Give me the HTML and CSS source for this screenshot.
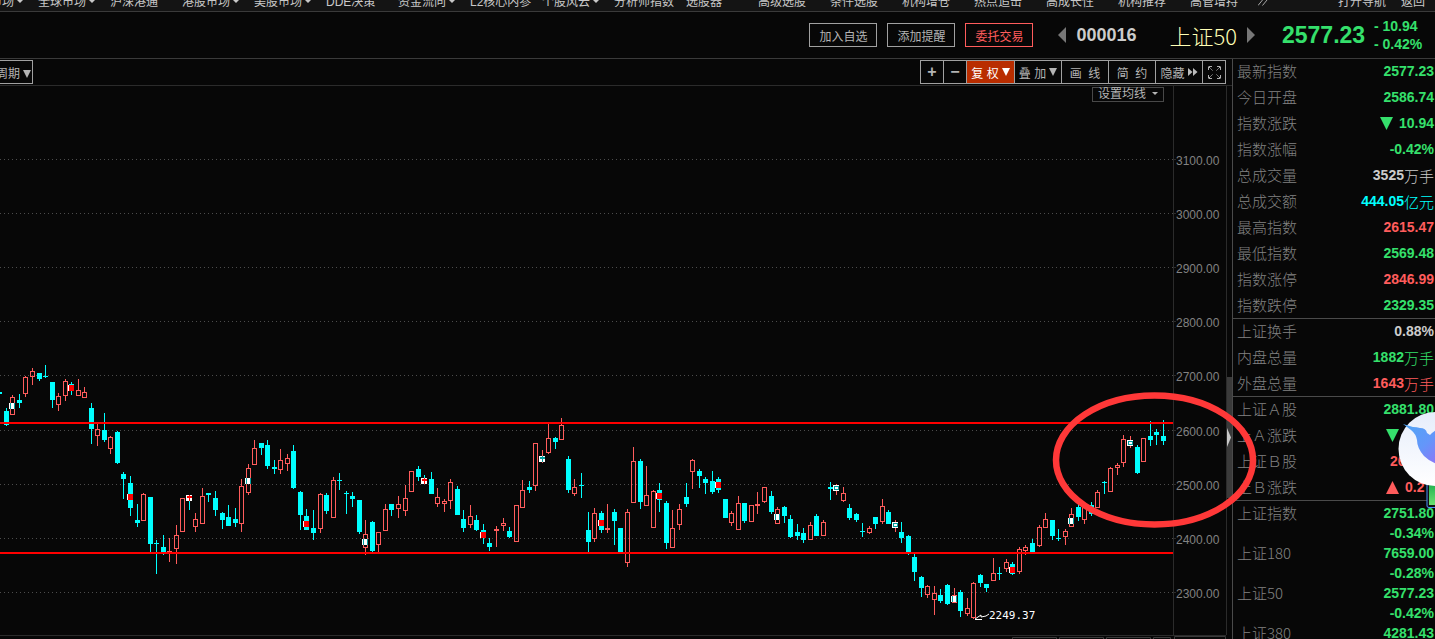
FILE: index.html
```html
<!DOCTYPE html>
<html lang="zh-CN">
<head>
<meta charset="utf-8">
<title>上证50 000016</title>
<link rel="stylesheet" href="styles.css">
</head>
<body>
<nav class="nav">
  <a class="first caret" href="#">市场</a><a class="caret" href="#">全球市场</a><a href="#">沪深港通</a><a class="caret" href="#">港股市场</a><a class="caret" href="#">美股市场</a><a href="#">DDE决策</a><a class="caret" href="#">资金流向</a><a href="#">L2核心内参</a><a class="caret" href="#">个股风云</a><a href="#">分析师指数</a><a href="#">选股器</a><a href="#">高级选股</a><a href="#">条件选股</a><a href="#">机构增仓</a><a href="#">热点追击</a><a href="#">高成长性</a><a href="#">机构推荐</a><a href="#">高管增持</a>
  <svg class="more" width="10" height="10" viewBox="0 0 10 10"><path d="M0 8.500 4.500 3 M4.500 8.500 9 3" fill="none" stroke="#a8a8a8"/></svg>
  <span class="nav-end"><a href="#">打开导航</a><a href="#">返回</a></span>
</nav>
<header class="head">
  <div class="actions"><button>加入自选</button><button>添加提醒</button><button class="trade">委托交易</button></div>
  <div class="stock">
    <svg width="8" height="16" viewBox="0 0 8 16"><path d="M8 0V16L0 8z" fill="#777"/></svg>
    <span class="code">000016</span>
    <h1>上证50</h1>
    <svg width="8" height="16" viewBox="0 0 8 16"><path d="M0 0V16L8 8z" fill="#777"/></svg>
  </div>
  <strong class="price">2577.23</strong>
  <div class="change"><span>- 10.94</span><span>- 0.42%</span></div>
</header>
<main class="main">
  <section class="left">
    <div class="tools">
      <button class="period">周期<i class="tri"></i></button>
      <div class="toolset">
        <button class="sq sign" aria-label="放大">+</button>
        <button class="sq sign" aria-label="缩小">−</button>
        <button class="wide active">复 权<i class="tri"></i></button>
        <button class="wide">叠 加<i class="tri"></i></button>
        <button class="wide">画&nbsp; 线</button>
        <button class="wide">简&nbsp; 约</button>
        <button class="wide">隐藏<svg width="10" height="8" viewBox="0 0 10 8"><path d="M0 0 4.500 4 0 8zM5 0 9.500 4 5 8z" fill="#bbb"/></svg></button>
        <button class="sq" aria-label="全屏"><svg width="13" height="13" viewBox="0 0 13 13"><path d="M.5 4V.5H4M.5.5 4.500 4.500M9 .5H12.500V4M12.500.5 8.500 4.500M.5 9V12.500H4M.5 12.500 4.500 8.500M9 12.500H12.500V9M12.500 12.500 8.500 8.500" fill="none" stroke="#b0b0b0" stroke-dasharray="3 1"/></svg></button>
      </div>
    </div>
    <div class="chart">
      <button class="ma">设置均线<i class="tri small"></i></button>
      <svg class="plot" viewBox="0 86 1232 553" preserveAspectRatio="xMinYMin meet">
        <g id="grid" class="grid"></g>
        <g id="candles" shape-rendering="crispEdges"></g>
        <path d="M0 423H1173M0 553H1173" stroke="#f00" stroke-width="2"/>
        <path d="M1173.500 86V635M1226.500 86V635" stroke="#2b2b2b"/>
        <path d="M0 635.500H1226" stroke="#2b2b2b"/>
        <path d="M1012.500 639V637.500H1056.500V639M1059.500 639V637.500H1103.500V639M1106.500 639V637.500H1150.500V639M1153.500 639V637.500H1170.500V639M1174.500 639V636.500H1225.500V639" fill="none" stroke="#3a3a3a"/>
        <path d="M1227 377H1232V498H1227z" fill="#3a3a3a"/>
        <path d="M1227 428 1231 437.500 1227 447z" fill="#c8c8c8"/>
        <path d="M975 619 981 615 981 617 986 616 989 614M975 619.500H982" fill="none" stroke="#fff"/>
        <text class="low" x="989" y="619">2249.37</text>
      </svg>
    </div>
  </section>
  <aside class="panel">
    <dl class="group">
      <div><dt>最新指数</dt><dd>2577.23</dd></div>
      <div><dt>今日开盘</dt><dd>2586.74</dd></div>
      <div><dt>指数涨跌</dt><dd><svg width="13" height="13" viewBox="0 0 13 13"><path d="M0 0H13L6.500 13z" fill="#35e06c"/></svg>10.94</dd></div>
      <div><dt>指数涨幅</dt><dd>-0.42%</dd></div>
      <div><dt>总成交量</dt><dd class="plain">3525<span>万手</span></dd></div>
      <div><dt>总成交额</dt><dd class="cyan">444.05<span>亿元</span></dd></div>
      <div><dt>最高指数</dt><dd class="up">2615.47</dd></div>
      <div><dt>最低指数</dt><dd>2569.48</dd></div>
      <div><dt>指数涨停</dt><dd class="up">2846.99</dd></div>
      <div><dt>指数跌停</dt><dd>2329.35</dd></div>
    </dl>
    <dl class="group">
      <div><dt>上证换手</dt><dd class="plain">0.88%</dd></div>
      <div><dt>内盘总量</dt><dd>1882<span>万手</span></dd></div>
      <div><dt>外盘总量</dt><dd class="up">1643<span>万手</span></dd></div>
    </dl>
    <dl class="group">
      <div><dt>上证Ａ股</dt><dd>2881.80</dd></div>
      <div><dt>上Ａ涨跌</dt><dd><svg width="13" height="13" viewBox="0 0 13 13"><path d="M0 0H13L6.500 13z" fill="#35e06c"/></svg><b></b></dd></div>
      <div><dt>上证Ｂ股</dt><dd class="up"><b class="long">26</b></dd></div>
      <div><dt>上Ｂ涨跌</dt><dd class="up"><svg width="13" height="13" viewBox="0 0 13 13"><path d="M0 13H13L6.500 0z" fill="#ff5c5c"/></svg><b>0.2</b></dd></div>
    </dl>
    <dl class="group indices">
      <div><dt>上证指数</dt><dd>2751.80</dd><dd>-0.34%</dd></div>
      <div><dt>上证180</dt><dd>7659.00</dd><dd>-0.28%</dd></div>
      <div><dt>上证50</dt><dd>2577.23</dd><dd>-0.42%</dd></div>
      <div><dt>上证380</dt><dd>4281.43</dd></div>
    </dl>
  </aside>
</main>
<svg class="ring" width="210" height="140" viewBox="0 0 210 140"><ellipse cx="104.500" cy="70" rx="98.500" ry="64.500" fill="none" stroke="#ff3838" stroke-width="6.500"/></svg>
<svg class="bird" width="40" height="100" viewBox="1395 410 40 100">
  <defs>
    <linearGradient id="disc" x1="0" y1="0" x2="0" y2="1"><stop offset="0" stop-color="#e6edfb"/><stop offset="1" stop-color="#fff"/></linearGradient>
    <linearGradient id="wing" x1="0" y1="0" x2="1" y2="1"><stop offset="0" stop-color="#4fa5f5"/><stop offset=".5" stop-color="#6496fa"/><stop offset="1" stop-color="#9c6af5"/></linearGradient>
    <linearGradient id="bar" x1="0" y1="0" x2="0" y2="1"><stop offset="0" stop-color="#12a84a"/><stop offset="1" stop-color="#6ce070"/></linearGradient>
  </defs>
  <path d="M1427 480H1440V508H1427z" fill="#111"/>
  <path d="M1429 480H1436V505H1429z" fill="url(#bar)"/>
  <path d="M1427 484V506Q1427 507.500 1429 507.500H1435" fill="none" stroke="#4d8fff"/>
  <circle cx="1435.500" cy="449" r="37" fill="url(#disc)"/>
  <path d="M1403 424 1413 427Q1417 427 1420 428Q1426 428 1427 433L1430 435Q1435 429 1446 426V466Q1432 464 1424 456Q1417 448 1417 440Q1416 434 1411 430z" fill="url(#wing)"/>
</svg>
<script src="chart.js"></script>
</body>
</html>
```
FILE: styles.css
```css
* { box-sizing: border-box; }
body {
  margin: 0;
  height: 100vh;
  overflow: hidden;
  position: relative;
  display: flex;
  flex-direction: column;
  background: #070707;
  color: #b4b4b4;
  font: 12px "Liberation Sans", "Noto Sans CJK SC", sans-serif;
}
button {
  margin: 0;
  padding: 0;
  border: 1px solid #a0a0a0;
  background: transparent;
  color: #b4b4b4;
  font: inherit;
  white-space: nowrap;
}
a { color: inherit; text-decoration: none; }
dl, dd, h1 { margin: 0; }

.nav {
  flex: none;
  display: flex;
  height: 12px;
  overflow: hidden;
  border-bottom: 1px solid #3a3a3a;
  background: #141414;
  color: #c8c8c8;
  line-height: 12px;
}
.nav > a, .nav-end { margin-top: -4px; }
.nav > a { flex: none; width: 72px; white-space: nowrap; }
.nav > a.first { width: 48px; margin-left: -10px; }
.caret::after {
  content: "";
  display: inline-block;
  margin-left: 3px;
  vertical-align: 3px;
  border: 3px solid transparent;
  border-top-color: #c8c8c8;
  border-bottom: 0;
}
.more { flex: none; margin: -3px 0 0 -4px; }
.nav-end { display: flex; gap: 15px; margin-left: auto; padding-right: 10px; }

.head {
  flex: none;
  display: flex;
  align-items: center;
  justify-content: flex-end;
  height: 47px;
  border-bottom: 1px solid #3a3a3a;
}
.actions { display: flex; gap: 10px; }
.actions button { width: 68px; height: 24px; }
.actions .trade { border-color: #ff5c5c; color: #ff5c5c; }
.stock { display: flex; align-items: center; gap: 10px; margin-left: 25px; }
.code { width: 83px; font-size: 18px; font-weight: bold; color: #ccc; }
.stock h1 { font: 300 22px/32px "Noto Sans CJK SC", sans-serif; color: #ffffb4; }
.price { margin-left: 27px; width: 92px; color: #35e06c; font-size: 23px; }
.change { width: 61px; display: grid; line-height: 18px; color: #35e06c; font-size: 14px; font-weight: bold; white-space: nowrap; }

.main { flex: 1; min-height: 0; display: flex; }
.left { flex: 1; min-width: 0; display: flex; flex-direction: column; }
.tools {
  flex: none;
  display: flex;
  justify-content: space-between;
  padding: 1px 6px 1px 0;
  border-bottom: 1px solid #2b2b2b;
}
.tools button { height: 24px; }
.period { width: 39px; margin-left: -6px; }
.toolset { display: flex; }
.toolset button { display: flex; align-items: center; justify-content: center; margin-left: -1px; }
.toolset .sq { width: 24px; }
.toolset .wide { width: 48px; }
.toolset .active { width: 49px; background: #b92d00; color: #fff; }
.sign { font-size: 16px; font-weight: bold; }
.wide svg { margin-left: 3px; }
.tri {
  display: inline-block;
  margin-left: 3px;
  border: 4px solid transparent;
  border-top: 8px solid currentColor;
  border-bottom: 0;
}
.tri.small { margin-left: 6px; border-width: 3px 3px 0; vertical-align: 3px; }

.chart { flex: 1; min-height: 0; position: relative; }
.plot { display: block; width: 100%; }
.ma {
  position: absolute;
  top: 1px;
  right: 68px;
  width: 72px;
  height: 15px;
  border-color: #484848;
  line-height: 13px;
}
.grid path { stroke: #4c4c4c; stroke-dasharray: 1 3; }
.grid .tick { stroke: #2b2b2b; stroke-dasharray: none; }
.grid text { fill: #828282; font-size: 12px; }
.low { fill: #fff; font: 11px "DejaVu Sans Mono", monospace; }

.panel { flex: none; width: 203px; border-left: 1px solid #4a4a4a; }
.group {
  display: grid;
  gap: 1px;
  border-bottom: 1px solid #4a4a4a;
}
.group div {
  display: flex;
  justify-content: space-between;
  padding: 0 1px 0 4px;
  line-height: 25px;
  height: 25px;
}
.group dt { color: #828282; font: 300 15px/24px "Noto Sans CJK SC", sans-serif; }
.group dd { display: flex; align-items: center; color: #35e06c; font-size: 14px; font-weight: bold; }
.group dd span { font: 300 15px/24px "Noto Sans CJK SC", sans-serif; }
.group dd svg { margin-right: 6px; }
.group dd b { width: 29px; }
.group dd b.long { width: 44px; }
.group .up { color: #ff5c5c; }
.group .cyan { color: #0ff; }
.group .plain { color: #ccc; }
.group.indices { gap: 0; padding-top: 2px; border: 0; }
.indices div { display: grid; grid-template-columns: 1fr auto; grid-auto-rows: 20px; height: auto; line-height: 20px; }
.indices dt { line-height: 20px; }
.indices dd { grid-column: 2; justify-content: flex-end; }

.ring { position: absolute; top: 390px; right: 175px; }
.bird { position: absolute; top: 410px; right: 0; }
```
FILE: chart.js
```js
const RED = "#ff5c5c", CYAN = "#00ffff";
// left edge, high, body top, body bottom, low; "r" hollow rising, "c" filled falling
const data = `-3 392 392 394 394 c
4 408 411 425 426 c
10 395 397 415 415 r
17 394 400 403 408 c
23 376 377 394 397 r
30 368 371 377 385 r
37 373 373 379 381 c
43 365 376 377 378 c
50 382 382 400 408 c
56 393 396 405 411 r
63 379 381 396 401 r
69 382 384 391 395 c
76 379 390 396 396 r
82 387 392 398 398 r
89 403 408 429 444 c
95 423 429 436 446 r
102 413 430 440 442 c
108 436 437 449 454 r
115 431 432 463 464 c
121 472 474 479 499 c
128 476 483 508 516 c
135 504 520 523 527 c
141 493 494 521 521 r
148 497 497 544 552 c
154 540 543 544 574 c
161 535 547 553 555 c
167 538 551 553 562 r
174 525 535 549 564 r
180 498 498 532 532 r
187 495 496 498 510 c
193 513 519 527 532 r
200 488 496 524 524 r
206 493 493 495 502 c
213 491 498 510 516 c
220 512 513 520 529 c
226 505 517 526 526 c
233 508 519 523 527 c
239 479 486 524 532 r
246 464 468 493 495 r
252 440 448 465 465 r
259 443 443 448 455 c
265 440 445 466 469 c
272 460 467 469 474 c
278 449 460 470 474 r
285 454 458 464 471 r
291 445 451 488 489 c
298 491 492 515 530 c
304 509 516 530 530 c
311 510 528 533 540 c
318 493 494 529 533 r
324 493 495 511 514 c
331 477 480 518 518 r
337 473 480 481 490 c
344 491 493 494 514 c
350 492 496 499 507 c
357 500 500 532 534 c
363 520 534 548 555 r
370 521 522 551 553 c
376 532 532 545 552 r
383 504 509 531 531 r
389 504 504 510 516 c
396 496 504 509 518 r
403 485 498 511 516 r
409 471 471 492 492 r
416 466 469 477 481 c
422 475 479 481 484 c
429 472 479 494 494 c
435 488 497 504 507 r
442 499 501 504 512 r
448 479 482 501 509 r
455 486 489 515 515 c
461 510 519 528 532 c
468 505 516 525 528 r
474 515 520 530 531 c
481 524 530 538 544 c
487 538 543 547 551 c
494 526 529 531 547 r
501 518 523 526 531 r
507 527 531 537 538 c
514 505 505 542 542 r
520 480 490 508 508 r
527 481 487 490 493 c
533 443 443 486 491 r
540 450 457 459 463 r
546 423 438 453 454 r
553 437 438 442 449 c
559 418 425 440 440 r
566 456 459 490 493 c
572 479 487 494 496 r
579 473 485 486 498 c
586 512 530 542 552 c
592 508 513 539 542 r
599 511 513 530 533 c
605 504 528 530 533 r
612 509 512 521 545 c
618 528 528 552 552 c
625 509 512 563 567 r
631 447 461 503 503 r
638 459 461 502 509 c
644 466 495 506 506 r
651 490 491 528 528 r
657 483 490 500 512 c
664 501 503 543 549 c
670 510 528 548 548 r
677 504 509 525 530 r
684 483 497 504 507 c
690 459 460 472 489 r
697 469 471 476 488 c
703 477 479 483 494 c
710 471 481 492 494 c
716 477 479 490 493 c
723 499 499 518 518 c
729 511 513 523 526 r
736 496 503 530 530 r
742 503 503 521 523 c
749 505 505 522 522 r
755 492 504 506 514 r
762 487 487 502 503 r
769 491 496 512 514 c
775 507 509 524 524 r
782 506 507 516 523 c
788 515 519 537 538 c
795 524 532 536 540 c
801 528 533 540 543 c
808 522 525 540 540 r
814 514 516 536 536 c
821 520 522 536 536 r
828 482 487 489 500 c
834 484 485 490 495 r
841 487 493 501 502 r
847 504 508 518 520 c
854 513 514 520 522 c
860 523 531 532 537 c
867 526 528 533 534 r
873 517 517 524 529 c
880 499 506 522 524 r
886 510 512 524 524 c
893 520 522 527 532 r
899 522 532 538 543 c
906 535 536 552 555 c
912 554 557 572 581 c
919 576 577 588 597 c
925 585 586 595 598 r
932 586 593 600 615 r
938 589 595 601 603 c
945 584 585 604 605 c
952 588 595 603 603 r
958 590 592 611 617 c
965 598 608 614 616 r
971 582 583 618 619 r
978 574 575 583 587 c
984 584 584 588 592 c
991 558 573 581 581 r
997 567 573 574 580 c
1004 559 562 569 572 r
1010 562 564 574 575 c
1017 547 549 572 574 r
1023 545 547 551 555 r
1030 539 543 552 552 c
1037 525 527 546 547 r
1043 513 519 528 528 r
1050 520 520 536 540 c
1056 529 538 539 541 c
1063 529 531 537 545 r
1069 508 514 527 527 r
1076 503 507 517 521 c
1082 504 504 520 524 r
1089 502 505 514 516 c
1095 490 492 508 508 r
1102 481 482 483 494 c
1108 467 468 492 492 r
1115 463 465 468 475 r
1121 435 439 463 467 r
1128 436 441 444 448 r
1135 445 447 473 474 c
1141 438 438 462 462 r
1148 421 436 440 446 c
1154 429 432 435 445 c
1161 420 436 441 445 c`;
// event markers: left edge, top, style
const marks = `9 403 white|68 385 red|127 494 red|186 495 cross|245 478 white|303 521 red|362 539 white|421 478 cross|480 532 red|539 456 teal|598 520 red|656 493 red|715 482 red|774 514 white|833 485 box|892 522 box|951 596 white|1009 567 red|1068 518 white|1127 440 box`;

const rect = (x, y, w, h, fill, stroke) =>
  `<rect x="${x}" y="${y}" width="${w}" height="${h}" fill="${fill}"${stroke ? ` stroke="${stroke}"` : ""}/>`;

let out = "";
for (const line of data.split("\n")) {
  const [a, b, c, d, e, kind] = line.split(" ");
  const x = +a, high = +b, top = +c, bottom = +d, low = +e;
  const color = kind === "r" ? RED : CYAN;
  if (top > high) out += rect(x + 2, high, 1, top - high, color);
  if (low > bottom) out += rect(x + 2, bottom, 1, low - bottom, color);
  out += kind === "r" && bottom - top > 2
    ? rect(x + 0.5, top + 0.5, 4, bottom - top - 1, "none", RED)
    : rect(x, top, 5, bottom - top, color);
}
for (const m of marks.split("|")) {
  const [a, b, kind] = m.split(" ");
  const x = +a, y = +b;
  out += rect(x, y, 6, 6, "#fff");
  if (kind === "white") out += rect(x + 1, y, 1, 6, "#00a0a0") + rect(x + 5, y, 1, 6, "#00a0a0");
  if (kind === "red") out += rect(x + 1, y, 5, 6, "#f00");
  if (kind === "cross") out += rect(x + 1, y + 1, 5, 2, "#f00") + rect(x + 3, y, 1, 6, "#f00");
  if (kind === "teal") out += rect(x + 1, y + 1, 5, 2, "#00a0a0") + rect(x + 3, y, 1, 6, "#00a0a0");
  if (kind === "box") out += rect(x + 1.5, y + 1.5, 4, 3, "none", "#00a0a0");
}
document.getElementById("candles").innerHTML = out;

const levels = [[159, 3100], [213, 3000], [267, 2900], [321, 2800], [375, 2700], [430, 2600], [484, 2500], [538, 2400], [592, 2300]];
document.getElementById("grid").innerHTML = levels.map(([y, value]) =>
  `<path d="M0 ${y + 0.5}H1173"/><path class="tick" d="M1174 ${y + 0.5}H1176"/><text x="1176" y="${y + 6}">${value}.00</text>`).join("");
```
